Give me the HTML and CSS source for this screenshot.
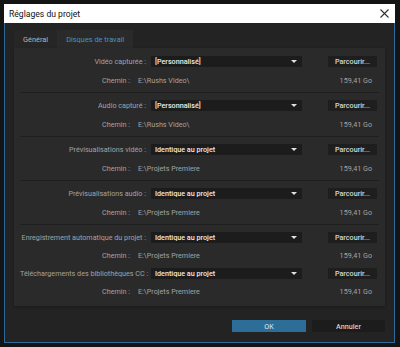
FILE: index.html
```html
<!DOCTYPE html>
<html lang="fr">
<head>
<meta charset="utf-8">
<title>Réglages du projet</title>
<link rel="stylesheet" href="styles.css">
</head>
<body>
<div class="dialog">
  <div class="titlebar">
    <span class="title">Réglages du projet</span>
    <svg class="close" width="9" height="9" viewBox="0 0 9 9"><path d="M0.5 0.5 L8.5 8.5 M8.5 0.5 L0.5 8.5" stroke="#333" stroke-width="1.1" fill="none"/></svg>
  </div>
  <div class="content">
    <div class="tabs">
      <div class="tab">Général</div>
      <div class="tab active">Disques de travail</div>
    </div>
    <div class="panel">
      <div class="section">
        <div class="row">
          <span class="label">Vidéo capturée :</span>
          <div class="select"><span>[Personnalisé]</span><i class="arrow"></i></div>
          <div class="btn">Parcourir...</div>
        </div>
        <div class="path"><span class="plabel">Chemin :</span><span class="pval">E:\Rushs Video\</span><span class="size">159,41 Go</span></div>
      </div>
      <div class="section">
        <div class="row">
          <span class="label">Audio capturé :</span>
          <div class="select"><span>[Personnalisé]</span><i class="arrow"></i></div>
          <div class="btn">Parcourir...</div>
        </div>
        <div class="path"><span class="plabel">Chemin :</span><span class="pval">E:\Rushs Video\</span><span class="size">159,41 Go</span></div>
      </div>
      <div class="section">
        <div class="row">
          <span class="label">Prévisualisations vidéo :</span>
          <div class="select"><span>Identique au projet</span><i class="arrow"></i></div>
          <div class="btn">Parcourir...</div>
        </div>
        <div class="path"><span class="plabel">Chemin :</span><span class="pval">E:\Projets Premiere</span><span class="size">159,41 Go</span></div>
      </div>
      <div class="section">
        <div class="row">
          <span class="label">Prévisualisations audio :</span>
          <div class="select"><span>Identique au projet</span><i class="arrow"></i></div>
          <div class="btn">Parcourir...</div>
        </div>
        <div class="path"><span class="plabel">Chemin :</span><span class="pval">E:\Projets Premiere</span><span class="size">159,41 Go</span></div>
      </div>
      <div class="section last">
        <div class="row">
          <span class="label">Enregistrement automatique du projet :</span>
          <div class="select"><span>Identique au projet</span><i class="arrow"></i></div>
          <div class="btn">Parcourir...</div>
        </div>
        <div class="path"><span class="plabel">Chemin :</span><span class="pval">E:\Projets Premiere</span><span class="size">159,41 Go</span></div>
        <div class="row">
          <span class="label">Téléchargements des bibliothèques CC :</span>
          <div class="select"><span>Identique au projet</span><i class="arrow"></i></div>
          <div class="btn">Parcourir...</div>
        </div>
        <div class="path"><span class="plabel">Chemin :</span><span class="pval">E:\Projets Premiere</span><span class="size">159,41 Go</span></div>
      </div>
    </div>
    <div class="footer">
      <div class="fbtn ok">OK</div>
      <div class="fbtn cancel">Annuler</div>
    </div>
  </div>
</div>
</body>
</html>
```

FILE: styles.css
```css
* { box-sizing: border-box; }
html, body { margin: 0; padding: 0; }
body {
  width: 400px;
  height: 347px;
  background: #141414;
  font-family: Roboto, "Liberation Sans", Arial, sans-serif;
  font-size: 7.2px;
  overflow: hidden;
  padding: 4px 0 0 4px;
}
.dialog {
  width: 391px;
  height: 339px;
  border: 1px solid #2b6a9a;
  border-top: none;
  background: #232323;
  display: flex;
  flex-direction: column;
}
.titlebar {
  height: 19px;
  background: #ffffff;
  display: flex;
  align-items: center;
  justify-content: space-between;
  padding: 0 5px 0 5px;
  margin: 0 -1px;
}
.title {
  font-size: 8.6px;
  color: #111;
}
.close { margin-right: 1px; }
.content {
  flex: 1;
  padding: 7px 9px 0 9px;
  display: flex;
  flex-direction: column;
}
.tabs {
  display: flex;
  height: 18px;
}
.tab {
  padding: 0 9px;
  display: flex;
  align-items: center;
  color: #b4b4b4;
  background: #262626;
  font-size: 7.4px;
}
.tab.active {
  color: #3f94cf;
  background: #2a2a2a;
}
.panel {
  width: 371px;
  background: #2a2a2a;
  padding-top: 1px;
  box-shadow: 0 1px 2px #1a1a1a;
}
.section {
  padding: 5px 0 5px;
  border-top: 1px solid #1f1f1f;
  margin: 0 6px;
  display: flex;
  flex-direction: column;
  gap: 5px;
}
.section:first-child { border-top: none; }
.section.last { padding-bottom: 8px; gap: 4px; }
.row {
  display: flex;
  align-items: center;
  height: 14px;
}
.label {
  width: 126px;
  text-align: right;
  color: #a3a3a3;
  white-space: nowrap;
  margin-right: 5px;
}
.select {
  width: 151px;
  height: 11px;
  background: #1c1c1c;
  display: flex;
  align-items: center;
  justify-content: space-between;
  padding: 0 5px 0 4px;
  color: #ececec;
  font-weight: 500;
}
.arrow {
  width: 0; height: 0;
  border-left: 3px solid transparent;
  border-right: 3px solid transparent;
  border-top: 3px solid #e0e0e0;
}
.btn {
  margin-left: 26px;
  width: 49px;
  height: 11px;
  background: #1e1e1e;
  color: #d8d8d8;
  font-weight: 500;
  display: flex;
  align-items: center;
  justify-content: center;
}
.path {
  display: flex;
  align-items: center;
  height: 14px;
  color: #a3a3a3;
}
.plabel {
  width: 110px;
  text-align: right;
}
.pval {
  margin-left: 8px;
  flex: 1;
}
.size {
  margin-right: 7px;
}
.footer {
  display: flex;
  justify-content: flex-end;
  gap: 6px;
  margin-top: 14px;
}
.fbtn {
  height: 12px;
  display: flex;
  align-items: center;
  justify-content: center;
}
.ok {
  width: 74px;
  background: #2d6e98;
  color: #dfe8ef;
}
.cancel {
  width: 73px;
  background: #1c1c1c;
  color: #cfcfcf;
  font-weight: 500;
}
```
